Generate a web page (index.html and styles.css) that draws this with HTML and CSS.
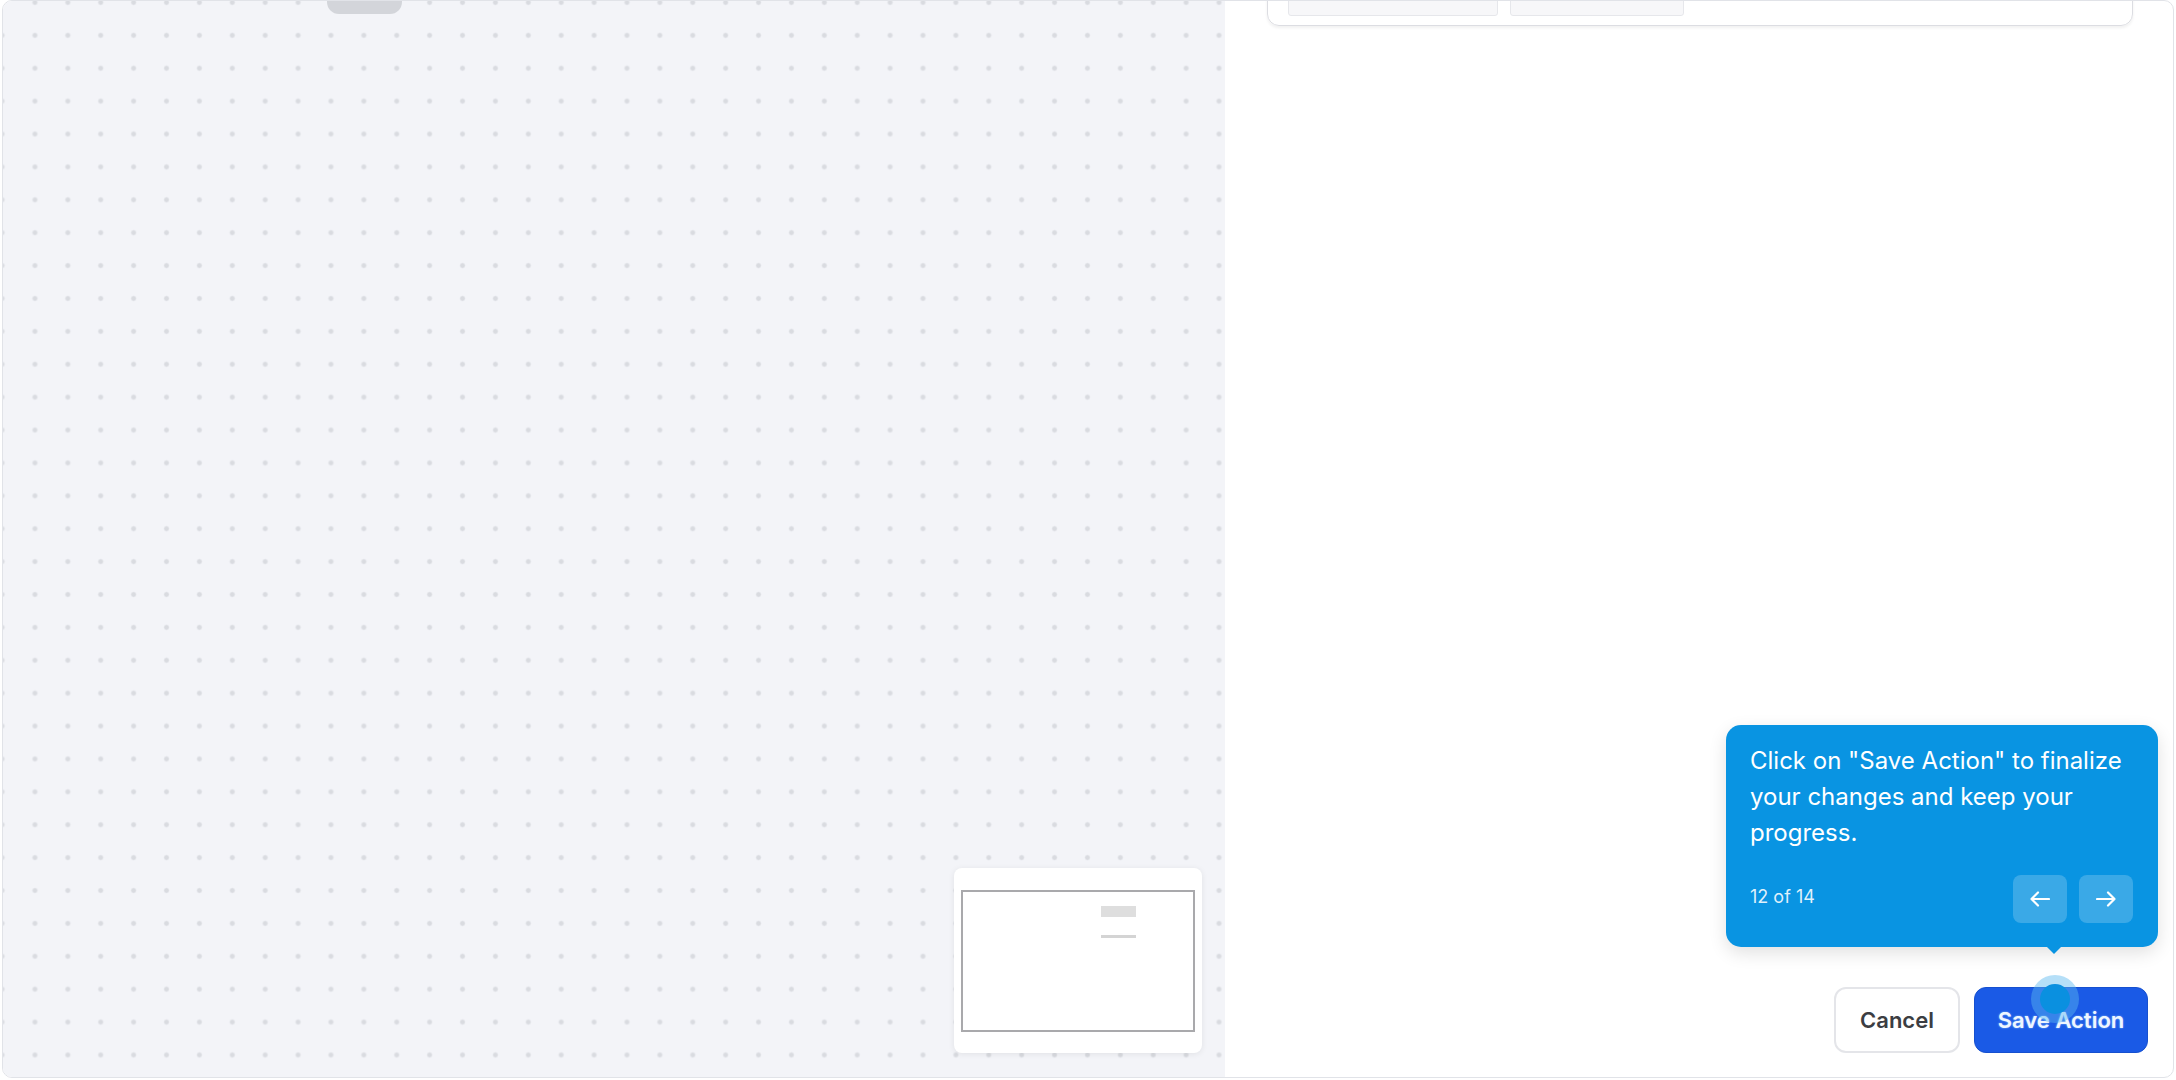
FILE: index.html
```html
<!DOCTYPE html>
<html lang="en">

<head>
    <meta charset="UTF-8">
    <meta name="viewport" content="width=device-width, initial-scale=1.0">
    <title>Action Editor</title>
    <link rel="stylesheet" href="styles.css">
</head>

<body>
    <div class="frame">
        <div class="canvas">
            <div class="node-pill"></div>

            <div class="minimap">
                <div class="minimap-view">
                    <div class="minimap-block"></div>
                    <div class="minimap-line"></div>
                </div>
            </div>
        </div>

        <div class="panel">
            <div class="panel-card">
                <div class="chip"></div>
                <div class="chip chip-short"></div>
            </div>

            <div class="panel-footer">
                <button class="btn btn-cancel">Cancel</button>
                <button class="btn btn-save">
                    Save Action
                    <span class="hotspot"><span class="hotspot-dot"></span></span>
                </button>
            </div>

            <div class="tour">
                <p class="tour-text">Click on "Save Action" to finalize your changes and keep your progress.</p>
                <div class="tour-footer">
                    <span class="tour-count">12 of 14</span>
                    <div class="tour-nav">
                        <button class="tour-btn" aria-label="Previous">
                            <svg width="20" height="16" viewBox="0 0 20 16" fill="none" stroke="currentColor" stroke-width="2.2" stroke-linecap="round" stroke-linejoin="round">
                                <path d="M19 8H1.5M8 1.5L1.5 8L8 14.5" />
                            </svg>
                        </button>
                        <button class="tour-btn" aria-label="Next">
                            <svg width="20" height="16" viewBox="0 0 20 16" fill="none" stroke="currentColor" stroke-width="2.2" stroke-linecap="round" stroke-linejoin="round">
                                <path d="M1 8H18.5M12 1.5L18.5 8L12 14.5" />
                            </svg>
                        </button>
                    </div>
                </div>
                <span class="tour-arrow"></span>
            </div>
        </div>
    </div>
</body>

</html>
```

FILE: styles.css
```css
* {
    box-sizing: border-box;
}

body {
    margin: 0;
    background-color: white;
    font-family: Inter, 'Noto Sans', sans-serif;
}

.frame {
    margin: 0 2px;
    height: 1078px;
    border: 1px solid #e1e3e8;
    border-radius: 10px;
    overflow: hidden;
    display: grid;
    grid-template-columns: 1222px 1fr;
}

/* canvas */
.canvas {
    position: relative;
    background-color: #f3f4f8;
    background-image: radial-gradient(circle, #d9dbe0 1.8px, rgba(217, 219, 224, 0.5) 2.4px, transparent 3.2px);
    background-size: 32.9px 32.9px;
    background-position: -17.4px -15px;
}

.node-pill {
    position: absolute;
    left: 324px;
    top: -11px;
    width: 75px;
    height: 24px;
    border-radius: 12px;
    background-color: #d3d5da;
}

.minimap {
    position: absolute;
    right: 23px;
    bottom: 24px;
    width: 248px;
    height: 185px;
    padding: 22px 7px 21px;
    background-color: white;
    border-radius: 8px;
    box-shadow: 0 1px 6px rgba(0, 0, 0, 0.08);
}

.minimap-view {
    height: 100%;
    border: 2px solid #a9a9ac;
    padding: 14px 0 0 138px;
}

.minimap-block {
    width: 35px;
    height: 11px;
    background-color: #dedede;
}

.minimap-line {
    width: 35px;
    height: 3px;
    margin-top: 18px;
    background-color: #d4d4d4;
}

/* right panel */
.panel {
    position: relative;
    display: flex;
    flex-direction: column;
    padding: 0 40px 24px 42px;
}

.panel-card {
    margin-top: -30px;
    display: flex;
    gap: 12px;
    padding: 0 20px 9px;
    border: 1.5px solid #dcdde2;
    border-radius: 12px;
    box-shadow: 0 2px 3px rgba(0, 0, 0, 0.06);
}

.chip {
    width: 210px;
    height: 44px;
    background-color: #f7f7f9;
    border: 1px solid #e6e7eb;
    border-radius: 3px;
}

.chip-short {
    width: 174px;
}

.panel-footer {
    margin-top: auto;
    margin-right: -15px;
    display: flex;
    justify-content: flex-end;
    gap: 14px;
}

.btn {
    height: 66px;
    padding: 0 22px;
    border-radius: 12px;
    font-family: Inter, sans-serif;
    font-size: 22px;
    font-weight: 600;
    cursor: pointer;
}

.btn-cancel {
    width: 126px;
    background-color: white;
    color: #3b3d42;
    border: 2px solid #e4e5e9;
}

.btn-save {
    position: relative;
    width: 174px;
    background-color: #1a5ae6;
    color: #eef6ff;
    border: 1px solid #1650cf;
    text-shadow: 0 0 2px rgba(170, 215, 255, 0.8);
}

.hotspot {
    position: absolute;
    left: 56px;
    top: -13px;
    width: 48px;
    height: 48px;
    border-radius: 50%;
    background-color: rgba(90, 185, 240, 0.45);
    display: flex;
    align-items: center;
    justify-content: center;
}

.hotspot-dot {
    width: 30px;
    height: 30px;
    border-radius: 50%;
    background-color: #0a90e0;
}

/* tour tooltip */
.tour {
    position: absolute;
    right: 15px;
    bottom: 130px;
    width: 432px;
    padding: 18px 25px 24px 24px;
    background-color: #0994e2;
    color: white;
    border-radius: 15px;
    box-shadow: 0 6px 18px rgba(0, 0, 0, 0.12);
}

.tour-text {
    margin: 0;
    font-size: 24px;
    line-height: 36px;
}

.tour-footer {
    margin-top: 24px;
    display: flex;
    align-items: center;
    justify-content: space-between;
}

.tour-count {
    font-size: 18px;
    color: rgba(255, 255, 255, 0.88);
    margin-top: -6px;
}

.tour-nav {
    display: flex;
    gap: 12px;
}

.tour-btn {
    width: 54px;
    height: 48px;
    border: none;
    border-radius: 8px;
    background-color: rgba(255, 255, 255, 0.2);
    color: white;
    display: flex;
    align-items: center;
    justify-content: center;
    cursor: pointer;
}

.tour-arrow {
    position: absolute;
    left: 321px;
    bottom: -7px;
    width: 0;
    height: 0;
    border-left: 7px solid transparent;
    border-right: 7px solid transparent;
    border-top: 7px solid #0994e2;
}
```
